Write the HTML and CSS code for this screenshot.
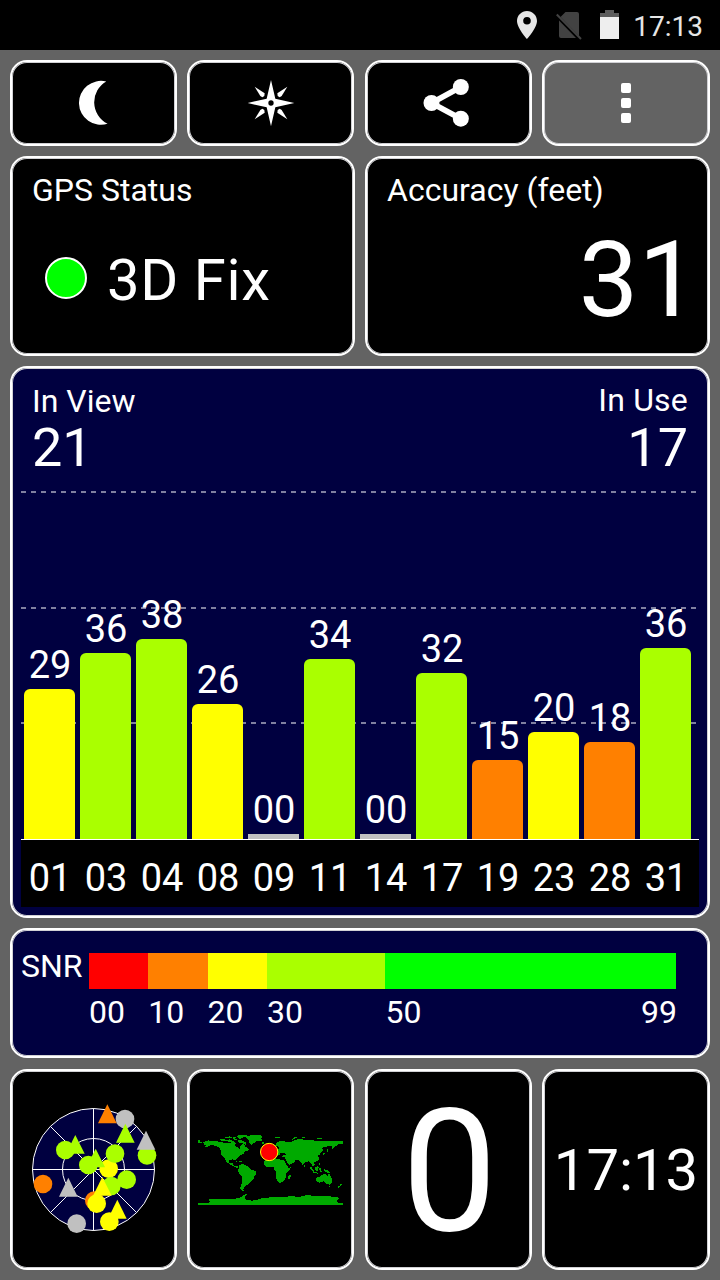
FILE: index.html
```html
<!DOCTYPE html>
<html lang="en">
<head>
    <meta charset="UTF-8">
    <meta name="viewport" content="width=device-width, initial-scale=1.0">
    <title>GPS Status</title>
    <link rel="stylesheet" href="styles.css">
</head>
<body>
    <header class="status-bar">
        <svg class="icon-location" width="20" height="28" viewBox="0 0 20 28">
            <path fill="#e6e6e6" fill-rule="evenodd" d="M10 0C4.500 0 0 4.400 0 9.900 0 17 10 28 10 28s10-11 10-18.100C20 4.400 15.500 0 10 0zm0 6a3.800 3.800 0 1 1 0 7.600A3.800 3.800 0 0 1 10 6z"/>
        </svg>
        <svg class="icon-sim" width="26" height="28" viewBox="0 0 26 28">
            <path fill="#424242" d="M9.500 0H21q2 0 2 2v22L4.500 5zM3 8.500L20 26H5q-2 0-2-2z"/>
            <path stroke="#424242" stroke-width="2" d="M.8 2.500L25 27"/>
        </svg>
        <svg class="icon-battery" width="19" height="29" viewBox="0 0 19 29">
            <path fill="#5c5c5c" d="M5 0h9v3h5v5H0V3h5z"/>
            <path fill="#eee" d="M0 7h19v22H0z"/>
        </svg>
        <span class="clock">17:13</span>
    </header>

    <main class="dashboard">
        <!-- Toolbar -->
        <button type="button" class="panel tool-btn" aria-label="Night mode">
            <svg width="50" height="50" viewBox="206.250 114 150 150">
                <path fill="#fff" d="M318 124.500A66 66 0 1 0 322 251.500A72 72 0 0 1 318 124.500z"/>
            </svg>
        </button>
        <button type="button" class="panel tool-btn second" aria-label="Compass">
            <svg width="50" height="50" viewBox="738 114 150 150">
                <g fill="#fff">
                    <path fill-rule="evenodd" d="M813 120L826 176L883 189L826 202L813 259L800 202L743 189L800 176zM813 181a8 8 0 1 0 0 16a8 8 0 1 0 0-16z"/>
                    <path d="M862 140L832 160L833 168L839 172L845 168z"/>
                    <path d="M764 140L794 160L793 168L787 172L781 168z"/>
                    <path d="M862 238L832 218L833 210L839 206L845 210z"/>
                    <path d="M764 238L794 218L793 210L787 206L781 210z"/>
                </g>
            </svg>
        </button>
        <button type="button" class="panel tool-btn" aria-label="Share">
            <svg width="56" height="56" viewBox="181.500 75 168 168">
                <path fill="none" stroke="#fff" stroke-width="17" d="M301 111L213 159L301 206"/>
                <g fill="#fff">
                    <circle cx="213" cy="159" r="24"/>
                    <circle cx="301" cy="111" r="24"/>
                    <circle cx="301" cy="206" r="24"/>
                </g>
            </svg>
        </button>
        <button type="button" class="panel tool-btn menu-btn" aria-label="Menu">
            <span class="dot"></span>
            <span class="dot"></span>
            <span class="dot"></span>
        </button>

        <!-- Fix and accuracy -->
        <section class="panel info-panel">
            <h2>GPS Status</h2>
            <div class="fix">
                <span class="fix-light"></span>
                <span>3D Fix</span>
            </div>
        </section>
        <section class="panel info-panel">
            <h2>Accuracy (feet)</h2>
            <div class="accuracy">31</div>
        </section>

        <!-- Satellite signal chart -->
        <section class="panel chart">
            <div class="chart-header">
                <div>
                    <h2>In View</h2>
                    <div class="count">21</div>
                </div>
                <div class="in-use">
                    <h2>In Use</h2>
                    <div class="count">17</div>
                </div>
            </div>
            <div class="plot">
                <div class="sat"><span>29</span><div class="bar yellow" style="height: 150px"></div></div>
                <div class="sat"><span>36</span><div class="bar lime" style="height: 186px"></div></div>
                <div class="sat"><span>38</span><div class="bar lime" style="height: 200px"></div></div>
                <div class="sat"><span>26</span><div class="bar yellow" style="height: 135px"></div></div>
                <div class="sat"><span>00</span><div class="bar none" style="height: 5px"></div></div>
                <div class="sat"><span>34</span><div class="bar lime" style="height: 180px"></div></div>
                <div class="sat"><span>00</span><div class="bar none" style="height: 5px"></div></div>
                <div class="sat"><span>32</span><div class="bar lime" style="height: 166px"></div></div>
                <div class="sat"><span>15</span><div class="bar orange" style="height: 79px"></div></div>
                <div class="sat"><span>20</span><div class="bar yellow" style="height: 107px"></div></div>
                <div class="sat"><span>18</span><div class="bar orange" style="height: 97px"></div></div>
                <div class="sat"><span>36</span><div class="bar lime" style="height: 191px"></div></div>
            </div>
            <div class="sat-ids">
                <span>01</span><span>03</span><span>04</span><span>08</span><span>09</span><span>11</span>
                <span>14</span><span>17</span><span>19</span><span>23</span><span>28</span><span>31</span>
            </div>
        </section>

        <!-- SNR legend -->
        <section class="panel snr">
            <span class="snr-label">SNR</span>
            <div class="scale">
                <div class="scale-step s10"><i class="red"></i><span>00</span></div>
                <div class="scale-step s10"><i class="orange"></i><span>10</span></div>
                <div class="scale-step s10"><i class="yellow"></i><span>20</span></div>
                <div class="scale-step s20"><i class="lime"></i><span>30</span></div>
                <div class="scale-step s49"><i class="green"></i><span>50</span><span class="max">99</span></div>
            </div>
        </section>

        <!-- Page tiles -->
        <section class="panel tile">
            <svg class="radar" width="128" height="132" viewBox="60 39 384 396">
                <g fill="#000040" stroke="#fff" stroke-width="3">
                    <circle cx="250.500" cy="238.500" r="183"/>
                    <circle cx="250.500" cy="238.500" r="93"/>
                    <path d="M67 238.500H434M250.500 55V422M121 109L380 368M380 109L121 368"/>
                </g>
                <g fill="#c0c0c0">
                    <circle cx="345" cy="87" r="28"/>
                    <circle cx="200" cy="401" r="28"/>
                </g>
                <g fill="#aaff00">
                    <circle cx="411" cy="196" r="28"/>
                    <path d="M346 101L374 158H318z"/>
                    <path d="M196 135L224 191H168z"/>
                    <circle cx="166" cy="180" r="28"/>
                </g>
                <path fill="#c0c0c0" d="M408 122L436 179H380z"/>
                <path fill="#c0c0c0" d="M175 263L203 320H147z"/>
                <path fill="#ff8000" d="M292 43L320 100H264z"/>
                <circle cx="296" cy="236" r="28" fill="#ffff00"/>
                <g fill="#aaff00">
                    <circle cx="315" cy="191" r="28"/>
                    <path d="M257 176L285 232H229z"/>
                    <circle cx="235" cy="225" r="28"/>
                    <circle cx="304" cy="288" r="28"/>
                    <circle cx="350" cy="269" r="28"/>
                </g>
                <circle cx="99" cy="282" r="28" fill="#ff8000"/>
                <circle cx="253" cy="332" r="28" fill="#ff8000"/>
                <g fill="#ffff00">
                    <path d="M277 261L305 317H249z"/>
                    <circle cx="260" cy="341" r="28"/>
                    <path d="M322 329L350 386H294z"/>
                    <circle cx="298" cy="395" r="28"/>
                </g>
            </svg>
        </section>
        <section class="panel tile second">
            <svg width="150" height="73" viewBox="18 39 450 219">
                <g fill="#00aa00" shape-rendering="crispEdges">
                    <!-- North America -->
                    <path d="M24 60h5v6h8v4H24zM40 66L54 61L70 63L90 65L104 69L122 68L130 64L138 70L134 78L146 84L150 88L152 74L162 73L166 80L178 88L172 92L160 96L162 101L150 106L144 112L138 119L140 126L136 120L126 118L116 122L119 130L128 128L130 136L142 138L147 146L136 142L118 132L110 126L102 112L94 104L94 92L86 82L76 78L62 74L54 80L40 82L50 76L42 74z"/>
                    <path d="M90 58h14l6 6H94zM108 61l10-3 12 6-14 3zM104 52l16-3 6 4-18 2zM128 50h12l-4 6 6 4-10 1zM140 47l18-2 14 1-10 5-14 7zM142 62l10-2 14 6 4 9-12-5-10-2zM142 122l12 2 4 2-10-1zM157 125h8v2h-8zM169 86l6 1v5l-6-2z"/>
                    <!-- Greenland and Iceland -->
                    <path d="M164 50L176 47L196 45L217 47L214 57L216 62L200 64L190 70L185 76L178 70L176 60L168 54zM214 66l9 0v5h-7z"/>
                    <!-- South America -->
                    <path d="M146 136L156 132L168 136L178 142L182 148L200 155L198 162L192 170L190 178L182 184L176 192L168 196L162 202L160 208L163 213L152 210L151 202L156 188L156 170L148 160L143 150L148 144z"/>
                    <!-- Africa -->
                    <path d="M221 124L228 118L252 114L268 118L283 122L289 134L295 143L303 142L297 152L288 162L288 172L280 184L272 189L264 187L258 172L257 154L252 148L250 140L232 142L222 134zM301 162l2 6-4 10-5-2 2-9z"/>
                    <!-- Eurasia -->
                    <path d="M262 90L268 84L266 80L256 78L258 70L268 64L280 62L290 66L302 66L316 60L330 56L344 60L360 60L376 62L400 62L424 64L459 62V72L444 73L438 78L430 86L426 88L426 78L414 79L402 82L396 84L400 92L394 98L390 100L392 106L384 104L386 112L388 118L382 124L372 126L374 134L370 140L362 130L356 124L348 126L338 136L334 128L326 120L316 120L312 128L298 135L288 122L284 112L276 110L280 106L290 104L282 98L270 98L268 106L258 108L254 112L252 100z"/>
                    <path d="M256 52h14v3h-14zM306 60l6-8 12-2-10 6zM336 50h10v4h-10zM380 55h16v3h-16zM400 100l8-3-4 6-8 4zM410 88l4 0 0 9-4-2zM386 130l4 0 2 10-4-4zM342 136h3v4h-3z"/>
                    <!-- South-east Asia and Oceania -->
                    <path d="M358 138l6 3 9 12-3 2-8-8zM374 144l8-6 5 3-4 11-8-1zM370 156l14 2v3l-14-2zM388 145l8 1-4 3 3 6-6 0zM402 148l10 2 10 8-4 2-8-3-8-4zM388 158h10v2h-10z"/>
                    <path d="M378 174L388 170L396 164L408 162L412 168L417 160L422 170L427 178L425 188L418 194L408 190L400 184L388 188L380 186zM452 192h4l-4 6-8 6-1-3 7-5zM416 197h5v3h-4z"/>
                    <!-- Antarctica -->
                    <path d="M24 249H54L62 244L54 240L62 237L90 236L120 238L148 234L158 228L168 222L172 224L164 230L168 240L186 242L202 240L216 234L246 232L290 230L308 228L326 232L346 226L380 227L412 228L444 232L448 236L438 243L446 248L459 249V255H24z"/>
                </g>
                <circle cx="237.500" cy="96" r="26" fill="#f00" stroke="#ffff00" stroke-width="3"/>
            </svg>
        </section>
        <section class="panel tile speed">0</section>
        <section class="panel tile time">17:13</section>
    </main>
</body>
</html>
```
FILE: styles.css
```css
* {
    box-sizing: border-box;
}
body {
    margin: 0;
    background: #636363;
    color: #fff;
    font-family: Roboto, "Liberation Sans", sans-serif;
}
h2 {
    margin: 0;
    font-size: 32px;
    font-weight: 400;
    line-height: 38px;
}

/* Status bar */
.status-bar {
    display: flex;
    justify-content: flex-end;
    align-items: center;
    height: 50px;
    padding-right: 17px;
    background: #000;
    color: #e6e6e6;
}
.icon-location {
    margin-right: 19px;
}
.icon-sim {
    margin: 1px 18px 0 0;
}
.icon-battery {
    margin: 0 14px 2px 0;
}
.clock {
    font-size: 28px;
    line-height: 50px;
    padding-top: 3px;
}

/* Panels */
.dashboard {
    display: grid;
    grid-template-columns: 167px 168px 167px 168px;
    grid-template-rows: 86px 200px 552px 130px 201px;
    gap: 10px;
    padding: 10px;
}
.panel {
    min-width: 0;
    background: #000;
    border: 2px solid #fff;
    border-radius: 17px;
    box-shadow: inset 0 0 0 1px #d0d0d4;
}
.second {
    margin-right: 1px;
}
.tool-btn {
    display: flex;
    justify-content: center;
    align-items: center;
    padding: 0;
}
.menu-btn {
    flex-direction: column;
    gap: 5px;
    background: #636363;
}
.dot {
    width: 10px;
    height: 10px;
    border-radius: 2px;
    background: #fff;
}

/* Fix and accuracy */
.info-panel {
    grid-column: span 2;
    padding: 13px 20px 0;
}
.fix {
    display: flex;
    align-items: center;
    gap: 20px;
    margin-top: 37px;
    padding-left: 13px;
    font-size: 58px;
    line-height: 68px;
    letter-spacing: 0.6px;
}
.fix-light {
    width: 42px;
    height: 42px;
    margin-bottom: 4px;
    border: 2px solid #fff;
    border-radius: 50%;
    background: #0f0;
}
.accuracy {
    margin: 11px -10px 0 0;
    text-align: right;
    font-size: 106px;
    line-height: 120px;
}

/* Chart */
.chart {
    grid-column: span 4;
    padding: 14px 9px 0;
    background: #000040;
}
.chart-header {
    display: flex;
    justify-content: space-between;
    height: 92px;
    padding: 0 11px;
}
.in-use {
    text-align: right;
}
.in-use h2 {
    margin: -1px 0 1px;
    letter-spacing: 0.2px;
}
.count {
    font-size: 54px;
    line-height: 55px;
}
.plot {
    display: flex;
    align-items: flex-end;
    gap: 5px;
    width: 678px;
    height: 366px;
    padding-left: 3px;
    border-bottom: 1px solid #fff;
    background-image:
        repeating-linear-gradient(90deg, #8080a0 0 5px, transparent 5px 10px),
        repeating-linear-gradient(90deg, #8080a0 0 5px, transparent 5px 10px),
        repeating-linear-gradient(90deg, #8080a0 0 5px, transparent 5px 10px);
    background-size: 676px 2px;
    background-position: 0 17px, 0 133px, 0 248px;
    background-repeat: no-repeat;
}
.sat {
    width: 51px;
    text-align: center;
}
.sat span {
    display: block;
    margin-bottom: 5px;
    padding-left: 1px;
    font-size: 38px;
    line-height: 38px;
}
.bar {
    border-radius: 6px 6px 0 0;
}
.sat-ids {
    display: flex;
    gap: 5px;
    width: 678px;
    height: 67px;
    padding: 9px 0 0 3px;
    background: #000;
    font-size: 38px;
    line-height: 58px;
}
.sat-ids span {
    width: 51px;
    padding-left: 1px;
    text-align: center;
}

.red { background: #f00; }
.orange { background: #ff8000; }
.yellow { background: #ff0; }
.lime { background: #af0; }
.green { background: #0f0; }
.none {
    background: #c0c0c0;
    border-radius: 0;
}

/* SNR legend */
.snr {
    grid-column: span 4;
    display: flex;
    align-items: flex-start;
    padding: 23px 32px 0 9px;
    background: #000040;
    font-size: 32px;
}
.snr-label {
    width: 68px;
    line-height: 27px;
}
.scale {
    display: flex;
    flex: 1;
}
.scale-step {
    display: flex;
    flex-wrap: wrap;
    justify-content: space-between;
    line-height: 46px;
    min-width: 0;
}
.scale-step i {
    width: 100%;
    height: 36px;
}
.scale-step .max {
    margin-right: -1px;
}
.s10 { flex: 10 0 0; }
.s20 { flex: 20 0 0; }
.s49 { flex: 49 0 0; }

/* Page tiles */
.tile {
    display: flex;
    justify-content: center;
    align-items: center;
    height: 201px;
    margin-top: 1px;
}
.radar {
    margin-bottom: 1px;
}
.speed {
    padding: 4px 0 0 2px;
    font-size: 170px;
    line-height: 1;
}
.time {
    font-size: 58px;
}
```
